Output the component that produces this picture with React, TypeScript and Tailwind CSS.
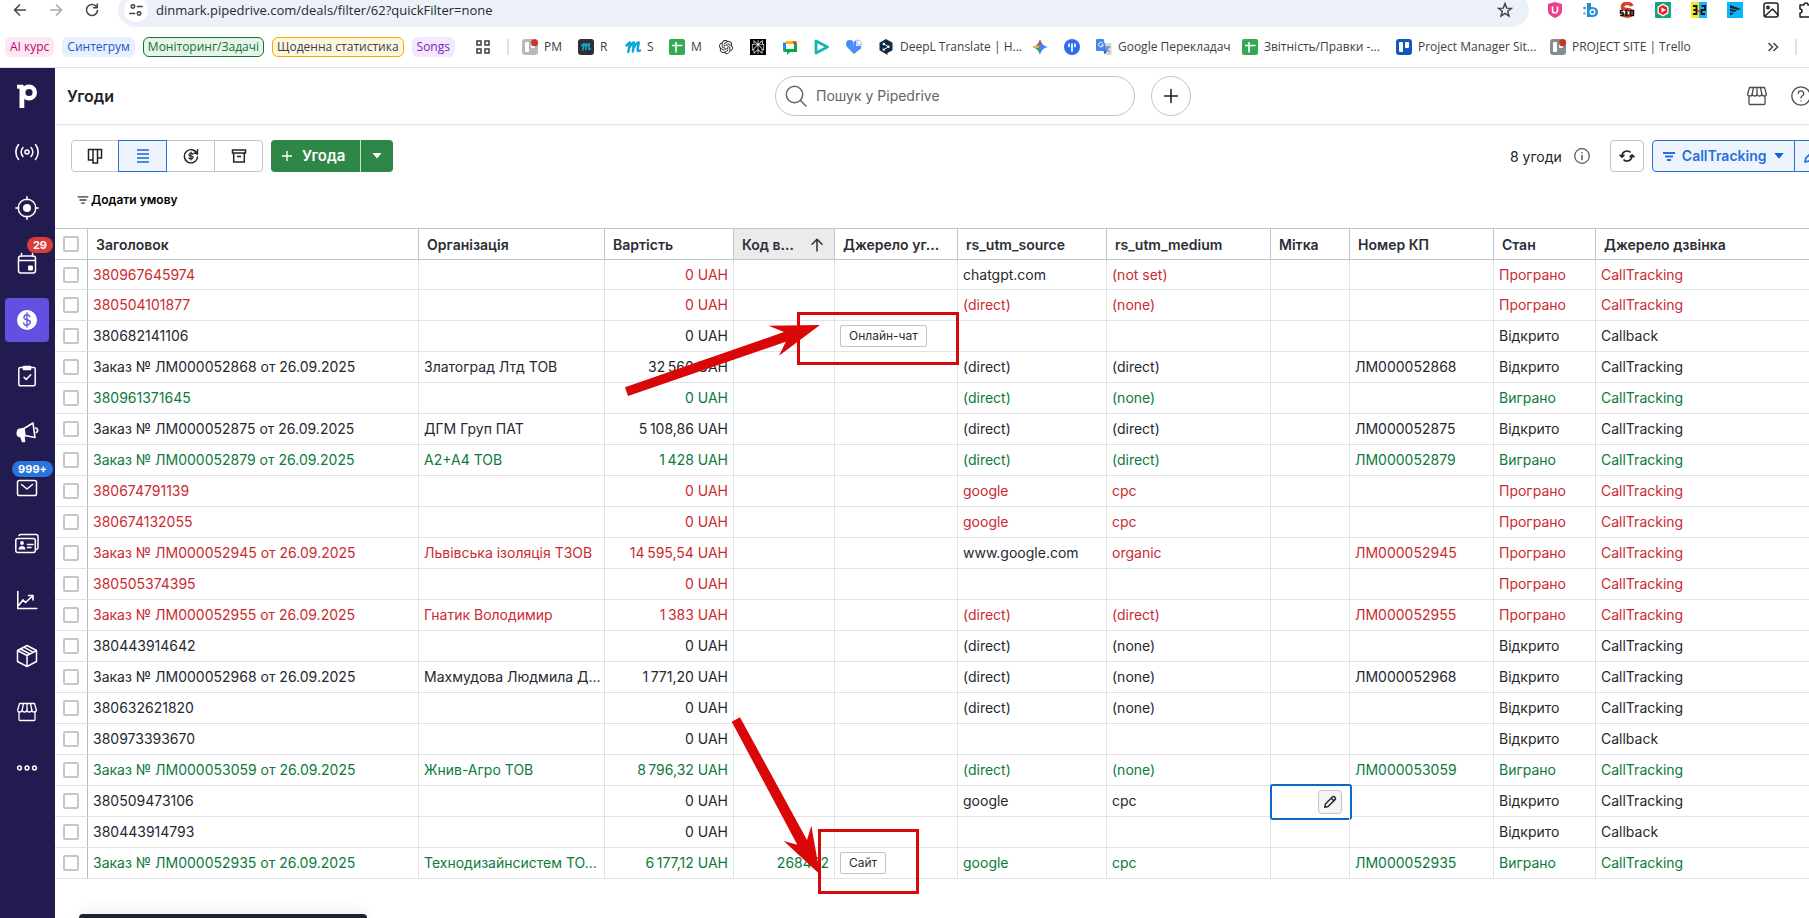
import React from "react";
import { SiOpenai, SiPerplexity } from "react-icons/si";

type Tone = "lost" | "won" | "open";

interface Deal {
  title: string;
  org?: string;
  value: string;
  code?: string;
  source?: string;
  utmSource?: string;
  utmSourcePlain?: boolean;
  utmMedium?: string;
  offer?: string;
  call: string;
  tone: Tone;
  editing?: boolean;
}

const toneClass: Record<Tone, string> = {
  lost: "text-[#cb2a30]",
  won: "text-[#0b7a3b]",
  open: "text-[#26282f]",
};

const toneLabel: Record<Tone, string> = {
  lost: "Програно",
  won: "Виграно",
  open: "Відкрито",
};

const CT = "CallTracking";

const deals: Deal[] = [
  { title: "380967645974", value: "0 UAH", utmSource: "chatgpt.com", utmSourcePlain: true, utmMedium: "(not set)", call: CT, tone: "lost" },
  { title: "380504101877", value: "0 UAH", utmSource: "(direct)", utmMedium: "(none)", call: CT, tone: "lost" },
  { title: "380682141106", value: "0 UAH", source: "Онлайн-чат", call: "Callback", tone: "open" },
  { title: "Заказ № ЛМ000052868 от 26.09.2025", org: "Златоград Лтд ТОВ", value: "32\u202f560 UAH", utmSource: "(direct)", utmMedium: "(direct)", offer: "ЛМ000052868", call: CT, tone: "open" },
  { title: "380961371645", value: "0 UAH", utmSource: "(direct)", utmMedium: "(none)", call: CT, tone: "won" },
  { title: "Заказ № ЛМ000052875 от 26.09.2025", org: "ДГМ Груп ПАТ", value: "5\u202f108,86 UAH", utmSource: "(direct)", utmMedium: "(direct)", offer: "ЛМ000052875", call: CT, tone: "open" },
  { title: "Заказ № ЛМ000052879 от 26.09.2025", org: "А2+А4 ТОВ", value: "1\u202f428 UAH", utmSource: "(direct)", utmMedium: "(direct)", offer: "ЛМ000052879", call: CT, tone: "won" },
  { title: "380674791139", value: "0 UAH", utmSource: "google", utmMedium: "cpc", call: CT, tone: "lost" },
  { title: "380674132055", value: "0 UAH", utmSource: "google", utmMedium: "cpc", call: CT, tone: "lost" },
  { title: "Заказ № ЛМ000052945 от 26.09.2025", org: "Львівська ізоляція ТЗОВ", value: "14\u202f595,54 UAH", utmSource: "www.google.com", utmSourcePlain: true, utmMedium: "organic", offer: "ЛМ000052945", call: CT, tone: "lost" },
  { title: "380505374395", value: "0 UAH", call: CT, tone: "lost" },
  { title: "Заказ № ЛМ000052955 от 26.09.2025", org: "Гнатик Володимир", value: "1\u202f383 UAH", utmSource: "(direct)", utmMedium: "(direct)", offer: "ЛМ000052955", call: CT, tone: "lost" },
  { title: "380443914642", value: "0 UAH", utmSource: "(direct)", utmMedium: "(none)", call: CT, tone: "open" },
  { title: "Заказ № ЛМ000052968 от 26.09.2025", org: "Махмудова Людмила Д...", value: "1\u202f771,20 UAH", utmSource: "(direct)", utmMedium: "(none)", offer: "ЛМ000052968", call: CT, tone: "open" },
  { title: "380632621820", value: "0 UAH", utmSource: "(direct)", utmMedium: "(none)", call: CT, tone: "open" },
  { title: "380973393670", value: "0 UAH", call: "Callback", tone: "open" },
  { title: "Заказ № ЛМ000053059 от 26.09.2025", org: "Жнив-Агро ТОВ", value: "8\u202f796,32 UAH", utmSource: "(direct)", utmMedium: "(none)", offer: "ЛМ000053059", call: CT, tone: "won" },
  { title: "380509473106", value: "0 UAH", utmSource: "google", utmMedium: "cpc", call: CT, tone: "open", editing: true },
  { title: "380443914793", value: "0 UAH", call: "Callback", tone: "open" },
  { title: "Заказ № ЛМ000052935 от 26.09.2025", org: "Технодизайнсистем ТО...", value: "6\u202f177,12 UAH", code: "268462", source: "Сайт", utmSource: "google", utmMedium: "cpc", offer: "ЛМ000052935", call: CT, tone: "won" },
];

const line = { fill: "none", stroke: "currentColor", strokeLinecap: "round", strokeLinejoin: "round" } as const;

/* ---------- browser icons ---------- */

function SheetsIcon() {
  return (
    <svg viewBox="0 0 16 16" className="size-4 shrink-0">
      <rect width="16" height="16" rx="2" fill="#34a853" />
      <path d="M3 6.5h10.500M7 3v10.500" stroke="#fff" strokeWidth="1.600" />
    </svg>
  );
}

function TrelloIcon({ color, dot }: { color: string; dot?: boolean }) {
  return (
    <svg viewBox="0 0 16 16" className="size-4 shrink-0">
      <rect width="16" height="16" rx="3" fill={color} />
      <rect x="3" y="3" width="4" height="10" rx="1" fill="#fff" />
      <rect x="9" y="3" width="4" height="6" rx="1" fill="#fff" />
      {dot && <circle cx="12.500" cy="3.800" r="3.500" fill="#d03025" />}
    </svg>
  );
}

function MIcon({ dark }: { dark?: boolean }) {
  return (
    <svg viewBox="0 0 16 16" className="size-4 shrink-0">
      {dark && <rect width="16" height="16" rx="3" fill="#2f3033" />}
      <g transform={dark ? "translate(3 3.500) scale(.64)" : "translate(0.500 1.500)"}>
        <path d="M1 5q2-3 3.500-3L2.800 11.500M4 7q3-5.500 4.500-5L7.300 11M8.500 7q3-5.500 4.800-5L12 9.500q0 2 2.500.500" {...line} stroke="#13a4dc" strokeWidth="2.400" />
      </g>
    </svg>
  );
}

function MeetChatIcon() {
  return (
    <svg viewBox="0 0 16 16" className="size-4 shrink-0">
      <path d="M2.500 3.500v8" stroke="#2684fc" strokeWidth="3" />
      <path d="M4 3.500h7" stroke="#ffba00" strokeWidth="3" />
      <path d="M11 2h2a2 2 0 0 1 2 2v1h-4z" fill="#ea4335" />
      <path d="M13.500 5v6.500h-12" stroke="#00ac47" strokeWidth="3" fill="none" />
      <path d="M5 12v4l4-4z" fill="#00ac47" />
    </svg>
  );
}

function PlayIcon() {
  return (
    <svg viewBox="0 0 16 16" className="size-4 shrink-0">
      <path d="M2 2v12l11.500-6z" fill="none" stroke="#14b8b0" strokeWidth="2.800" strokeLinejoin="round" />
    </svg>
  );
}

function HeartIcon() {
  return (
    <svg viewBox="0 0 16 16" className="size-4 shrink-0">
      <path d="M0 5a4 4 0 0 1 7.500-2L8 9h7.500L8 15 1 8Q0 7 0 5z" fill="#4c8dfb" />
      <path d="M8 9V3l2-2v6h5.500Q15 9 14 10z" fill="#4c8dfb" />
      <path d="M11 1q4 0 4.500 5H11z" fill="none" stroke="#8db6fd" />
    </svg>
  );
}

function DeeplIcon() {
  return (
    <svg viewBox="0 0 16 16" className="size-4 shrink-0">
      <path d="M8 0l6.500 3.700v7.600L9.500 14v2L8 15 1.500 11.300V3.700z" fill="#0f2b46" />
      <path d="M6 5l4.500 2.700L6 10.500" stroke="#fff" fill="none" strokeWidth=".9" />
      <circle cx="5.800" cy="5" r="1.200" fill="#fff" />
      <circle cx="10.500" cy="7.700" r="1.200" fill="#fff" />
      <circle cx="5.800" cy="10.600" r="1.200" fill="#fff" />
    </svg>
  );
}

function GeminiIcon() {
  return (
    <svg viewBox="0 0 16 16" className="size-4 shrink-0">
      <defs>
        <clipPath id="spark">
          <path d="M8 .300Q9.500 6.500 15.700 8 9.500 9.500 8 15.700 6.500 9.500.300 8 6.500 6.500 8 .300z" />
        </clipPath>
      </defs>
      <g clipPath="url(#spark)">
        <rect width="16" height="16" fill="#4285f4" />
        <path d="M0 0h12L8 6.500z" fill="#ea4335" />
        <path d="M0 5.500L7 7v2L0 10z" fill="#fbbc04" />
        <path d="M0 9.500l7-1 1 7.500H0z" fill="#34a853" />
      </g>
    </svg>
  );
}

function BlueDotIcon() {
  return (
    <svg viewBox="0 0 16 16" className="size-4 shrink-0">
      <circle cx="8" cy="8" r="8" fill="#2f6df0" />
      <path d="M5 5v2.500M8 5v7M11 5v2.500" stroke="#fff" strokeWidth="1.700" strokeLinecap="round" />
    </svg>
  );
}

function TranslateIcon() {
  return (
    <svg viewBox="0 0 16 16" className="size-4 shrink-0">
      <path d="M7 4h8.500v12H10z" fill="#d5d8db" />
      <path d="M9.500 8h5M12 7v1q0 3-2.500 5M10.500 9q1 3 3.500 4" stroke="#6d7782" fill="none" strokeWidth=".9" />
      <path d="M0 1q0-1 1-1h6.500l3.500 12H1q-1 0-1-1z" fill="#4387f4" />
      <path d="M7.500 12H11l-2.500 3.500z" fill="#2a56c6" />
      <path d="M7 4.500A2.300 2.300 0 1 0 7.300 6H5.200" fill="none" stroke="#fff" strokeWidth="1" />
    </svg>
  );
}

const bookmarks: { name: string; label?: string; width: string; icon: React.ReactNode }[] = [
  { name: "PM", label: "PM", width: "w-[52px]", icon: <TrelloIcon color="#b9b9b9" dot /> },
  { name: "R", label: "R", width: "w-[43px]", icon: <MIcon dark /> },
  { name: "S", label: "S", width: "w-10", icon: <MIcon /> },
  { name: "M", label: "M", width: "w-[45px]", icon: <SheetsIcon /> },
  { name: "ChatGPT", width: "w-7", icon: <span className="size-4 shrink-0 p-px text-[#2b2b2b]"><SiOpenai className="size-3.5" /></span> },
  { name: "Perplexity", width: "w-7", icon: <span className="size-4 shrink-0 bg-black p-px text-white"><SiPerplexity className="size-3.5" /></span> },
  { name: "Google Chat", width: "w-7", icon: <MeetChatIcon /> },
  { name: "Player", width: "w-7", icon: <PlayIcon /> },
  { name: "Heart", width: "w-7", icon: <HeartIcon /> },
  { name: "DeepL", label: "DeepL Translate | H...", width: "w-[150px]", icon: <DeeplIcon /> },
  { name: "Gemini", width: "w-7", icon: <GeminiIcon /> },
  { name: "Board", width: "w-7", icon: <BlueDotIcon /> },
  { name: "Translate", label: "Google Перекладач", width: "w-[142px]", icon: <TranslateIcon /> },
  { name: "Reports", label: "Звітність/Правки -...", width: "w-[150px]", icon: <SheetsIcon /> },
  { name: "Manager", label: "Project Manager Sit...", width: "w-[150px]", icon: <TrelloIcon color="#1558bc" /> },
  { name: "Project", label: "PROJECT SITE | Trello", width: "w-[150px]", icon: <TrelloIcon color="#838c91" dot /> },
];

const chips = [
  { label: "AI курс", style: "border-[#fde7f3] bg-[#fde7f3] text-[#b80672]" },
  { label: "Синтегрум", style: "border-[#e8f0fe] bg-[#e8f0fe] text-[#1a56c8]" },
  { label: "Моніторинг/Задачі", style: "border-[#137333] bg-[#e6f4ea] text-[#137333]" },
  { label: "Щоденна статистика", style: "border-[#f9ab00] bg-[#fef7e0] text-[#3c4043]" },
  { label: "Songs", style: "border-[#f3e8fd] bg-[#f3e8fd] text-[#7627bb]" },
];

function ExtensionIcons() {
  const box = "size-4 shrink-0";
  return (
    <div className="flex items-center gap-5">
      <svg viewBox="0 0 16 16" className={box}>
        <path d="M8 0l7 2v7q0 4-7 7-7-3-7-7V2z" fill="#ec3f8c" />
        <path d="M5.500 4.500v4a2.500 2.500 0 0 0 5 0v-4" fill="none" stroke="#fff" strokeWidth="1.600" />
      </svg>
      <svg viewBox="0 0 16 16" className={box}>
        <circle cx="1.500" cy="6" r="1.300" fill="#1d8bd1" />
        <circle cx="1.500" cy="11.500" r="1.300" fill="#5bb5e8" />
        <path d="M4 1h4v4q7 0 7 5t-6 5H4z" fill="#1d8fd6" />
        <circle cx="9.500" cy="10" r="2.300" fill="none" stroke="#fff" strokeWidth="1.400" />
      </svg>
      <svg viewBox="0 0 16 16" className={box}>
        <path d="M13 4Q12 1.500 8 1.500T3.500 4.500 8 7.500t4.500 3.500T8 14 3 12" fill="none" stroke="#d1432f" strokeWidth="3.600" />
        <path d="M4 8.500H1.500v2.500H4v2.500H1M9.500 8.500H7V13.500h2.500M7 11h2M11.500 8.500h3v5h-3z" fill="none" stroke="#111" strokeWidth="1.500" />
      </svg>
      <svg viewBox="0 0 16 16" className={box}>
        <rect width="16" height="16" rx="1" fill="#12a37f" />
        <path d="M8 1.500l5.500 3.200v6.600L8 14.500l-5.500-3.200V4.700z" fill="#fff" />
        <path d="M8 3l4.200 2.500v5L8 13l-4.200-2.500v-5z" fill="#ee1c25" />
        <path d="M6.500 5.500v5L11 8z" fill="#fff" />
      </svg>
      <svg viewBox="0 0 16 16" className={box}>
        <path d="M0 0h8v16H0z" fill="#f7e71c" />
        <path d="M8 0h8v16H8z" fill="#12b5f5" />
        <path d="M2 4h3.500v8H2M2.500 8h3M10.500 4H14v4h-3.500v4H14" fill="none" stroke="#111" strokeWidth="1.800" />
        <path d="M6.500 9h3" stroke="#e11" strokeWidth="1.500" />
      </svg>
      <svg viewBox="0 0 16 16" className={box}>
        <path d="M0 0h16v16H0z" fill="#08b7fb" />
        <path d="M3 3l11 4-3 1-8-2zM3 7l7 1.500-2.500 1.500L3 9zM3 10.500l4 .5-4 2.500z" fill="#15202b" />
      </svg>
      <svg viewBox="0 0 16 16" className={box} {...line} strokeWidth="1.500">
        <rect x="1" y="1" width="14" height="14" rx="2" />
        <circle cx="5" cy="5.500" r="1.200" />
        <path d="M2 14l7.500-7 5.500 6" />
      </svg>
      <svg viewBox="0 0 16 16" className={box} {...line} strokeWidth="1.500">
        <path d="M1 3h4a2 2 0 0 1 4 0h4v4a2 2 0 0 1 0 4v4H1v-4a2 2 0 0 0 0-4z" />
      </svg>
    </div>
  );
}

function Browser() {
  return (
    <div className="border-b border-[#dfe1e4] bg-white text-[#3c4043]">
      <div className="flex h-[27px] items-end overflow-hidden">
        <div className="flex h-[34px] w-full shrink-0 items-center">
          <div className="flex w-[118px] shrink-0 items-center gap-5 pl-3">
            <button aria-label="Назад" className="text-[#474747]">
              <svg viewBox="0 0 16 16" className="size-4" {...line} strokeWidth="1.600" strokeLinecap="butt"><path d="M14 8H2.500M8 2.500L2.500 8 8 13.500" /></svg>
            </button>
            <button aria-label="Вперед" className="text-[#a9a9a9]">
              <svg viewBox="0 0 16 16" className="size-4" {...line} strokeWidth="1.600" strokeLinecap="butt"><path d="M2 8h11.500M8 2.500L13.500 8 8 13.500" /></svg>
            </button>
            <button aria-label="Оновити" className="text-[#474747]">
              <svg viewBox="0 0 16 16" className="size-4" {...line} strokeWidth="1.600" strokeLinecap="butt"><path d="M13.500 8a5.500 5.500 0 1 1-1.600-3.900L13 5.500" /><path d="M13.300 1.500v4.300H9" /></svg>
            </button>
          </div>
          <div className="flex h-[34px] min-w-0 flex-1 items-center rounded-full bg-[#ecf0f9] pl-1.5 pr-4">
            <span className="flex size-6 shrink-0 items-center justify-center rounded-full bg-white">
              <svg viewBox="0 0 16 16" className="size-3.5" {...line} strokeWidth="1.700"><circle cx="4.500" cy="4" r="2" /><path d="M9.500 4H15M1 12h5.500" /><circle cx="11.500" cy="12" r="2" /></svg>
            </span>
            <input
              aria-label="Адреса"
              defaultValue="dinmark.pipedrive.com/deals/filter/62?quickFilter=none"
              className="ml-2 min-w-0 flex-1 bg-transparent pt-0.5 font-['Open_Sans','Noto_Sans',sans-serif] text-[13px] text-[#27292d] outline-none"
            />
            <button aria-label="Додати закладку">
              <svg viewBox="0 0 16 16" className="size-4" {...line} strokeWidth="1.400" strokeLinejoin="miter"><path d="M8 1.500l1.700 4.600 4.800.2-3.800 3 1.300 4.700L8 11.300 4 14l1.300-4.700-3.800-3 4.800-.2z" /></svg>
            </button>
          </div>
          <div className="w-[280px] shrink-0 overflow-hidden pl-[18px] text-[#1f1f1f]">
            <ExtensionIcons />
          </div>
        </div>
      </div>
      <nav aria-label="Закладки" className="flex h-10 items-center overflow-hidden pl-[5px] pb-px pr-3 font-['Open_Sans','Noto_Sans',sans-serif] text-xs">
        <div className="flex shrink-0 items-center gap-2">
          {chips.map((c) => (
            <button key={c.label} className={`flex h-5 items-center whitespace-nowrap rounded-md border px-1 font-medium ${c.style}`}>
              {c.label}
            </button>
          ))}
          <button aria-label="Усі групи" className="ml-3 flex size-4 items-center justify-center">
            <svg viewBox="0 0 14 14" className="size-3.5" fill="none" stroke="#474747" strokeWidth="1.600">
              <rect x="1" y="1" width="4" height="4" /><rect x="9" y="1" width="4" height="4" /><rect x="1" y="9" width="4" height="4" /><rect x="9" y="9" width="4" height="4" />
            </svg>
          </button>
        </div>
        <span className="ml-4 h-4 w-0.5 shrink-0 bg-[#d3e3fd]" />
        <div className="ml-[7px] flex min-w-0 flex-1 items-center gap-1 overflow-hidden">
          {bookmarks.map((b) => (
            <a key={b.name} href="#" aria-label={b.name} className={`flex h-7 shrink-0 items-center gap-1.5 whitespace-nowrap px-1.5 ${b.width}`}>
              {b.icon}
              {b.label}
            </a>
          ))}
        </div>
        <button aria-label="Інші закладки" className="mr-4 shrink-0">
          <svg viewBox="0 0 12 12" className="size-3" fill="none" stroke="#474747" strokeWidth="1.500"><path d="M1.500 2l4 4-4 4M6.500 2l4 4-4 4" /></svg>
        </button>
        <span className="h-4 w-0.5 shrink-0 bg-[#d3e3fd]" />
      </nav>
    </div>
  );
}

/* ---------- sidebar ---------- */

function ShopIcon({ className }: { className: string }) {
  return (
    <svg viewBox="0 0 20 20" className={className} {...line} strokeWidth="1.300">
      <path d="M2.500 1.500h15l1.800 6.500q0 2-2.200 2t-2.300-2q0 2-2.400 2T10 8q0 2-2.400 2T5.200 8q0 2-2.300 2T.700 8z" />
      <path d="M6.500 1.500L5.200 8M10 1.500V8M13.500 1.500L14.800 8M2 10.500v7q0 1 1 1h14q1 0 1-1v-7" />
    </svg>
  );
}

const sideIcon = "size-6";

const sideItems: { name: string; icon: React.ReactNode; badge?: string; badgeStyle?: string; active?: boolean }[] = [
  {
    name: "Pulse",
    icon: (
      <svg viewBox="0 0 24 24" className={sideIcon} {...line} strokeWidth="1.600">
        <circle cx="12" cy="12" r="2" />
        <path d="M8 16.500a6.500 6.500 0 0 1 0-9M16 7.500a6.500 6.500 0 0 1 0 9M3.500 19.500a12 12 0 0 1 0-15M20.500 4.500a12 12 0 0 1 0 15" />
      </svg>
    ),
  },
  {
    name: "Ліди",
    icon: (
      <svg viewBox="0 0 24 24" className={sideIcon} {...line} strokeWidth="1.500">
        <circle cx="12" cy="12" r="8.800" />
        <circle cx="12" cy="12" r="4" fill="currentColor" stroke="none" />
        <path d="M12 .800v3M12 20.200v3M.800 12h3M20.200 12h3" />
      </svg>
    ),
  },
  {
    name: "Календар",
    badge: "29",
    badgeStyle: "bg-[#dc3c37] px-[6px]",
    icon: (
      <svg viewBox="0 0 24 24" className={sideIcon} {...line} strokeWidth="1.500">
        <rect x="3.500" y="4" width="17" height="17" rx="2.500" />
        <path d="M4 8.500h16M6.500 1.500V4M17.500 1.500V4" />
        <rect x="13" y="13.500" width="5" height="5" rx="1" fill="currentColor" stroke="none" />
      </svg>
    ),
  },
  {
    name: "Угоди",
    active: true,
    icon: (
      <svg viewBox="0 0 24 24" className={sideIcon}>
        <circle cx="12" cy="12" r="10" fill="#fff" />
        <path d="M15 8.800q-.5-2-3-2t-3 2.200 3 2.800 3.200 2.700-3.200 2.700-3.300-2.200M12 5v14" fill="none" stroke="#6450e0" strokeWidth="1.400" strokeLinecap="round" />
      </svg>
    ),
  },
  {
    name: "Проєкти",
    icon: (
      <svg viewBox="0 0 24 24" className={sideIcon} {...line} strokeWidth="1.500">
        <rect x="3.800" y="3.500" width="16.400" height="18.300" rx="1.500" />
        <path d="M8.500 2.500h7v3h-7z" fill="currentColor" />
        <path d="M9 13.200l2.200 2.200 4.500-4.700" />
      </svg>
    ),
  },
  {
    name: "Кампанії",
    icon: (
      <svg viewBox="0 0 24 24" className={sideIcon} {...line} strokeWidth="1.600">
        <path d="M9 8.500l9-5.500 2 14.500-10-2" />
        <path d="M9 8.500l1 7.500-6 .5q-1.500-.2-1.800-2.500T3.500 9.500z" fill="currentColor" />
        <path d="M6 17l1.500 4.500H9.500L9 17z" fill="currentColor" />
        <path d="M20.500 8q2 .3 2.200 2t-1.500 2.500" />
      </svg>
    ),
  },
  {
    name: "Пошта",
    badge: "999+",
    badgeStyle: "bg-[#2a74da] px-[6px]",
    icon: (
      <svg viewBox="0 0 24 24" className={sideIcon} {...line} strokeWidth="1.500">
        <rect x="2.500" y="4.500" width="19" height="15" rx="1.800" />
        <path d="M6.500 8.500L12 13l5.500-4.500" />
      </svg>
    ),
  },
  {
    name: "Контакти",
    icon: (
      <svg viewBox="0 0 24 24" className={sideIcon} {...line} strokeWidth="1.500">
        <rect x=".8" y="6.500" width="19.500" height="14" rx="2" />
        <path d="M4 3.500Q4.500 2.500 6 2.500h15q2 0 2 2v11q0 1.500-1.500 1.800" />
        <circle cx="7" cy="11" r="1.900" fill="currentColor" stroke="none" />
        <path d="M3.500 17.500q.2-3.500 3.500-3.500t3.500 3.500z" fill="currentColor" stroke="none" />
        <path d="M12.500 12.500H18M12.500 15.500H16" />
      </svg>
    ),
  },
  {
    name: "Статистика",
    icon: (
      <svg viewBox="0 0 24 24" className={sideIcon} {...line} strokeWidth="1.600">
        <path d="M2.800 3.500v17h19M4 17l4-5 2.500 2.500L17 8.500M13.500 7.500h4.500V12" strokeLinejoin="miter" />
      </svg>
    ),
  },
  {
    name: "Продукти",
    icon: (
      <svg viewBox="0 0 24 24" className={sideIcon} {...line} strokeWidth="1.500">
        <path d="M12 1.500l9.500 5v11L12 22.500l-9.500-5v-11zM2.500 6.500L12 11.500l9.500-5M12 11.500v11M5.500 5l9.500 5M8.800 3.200l9.200 5" />
      </svg>
    ),
  },
  { name: "Marketplace", icon: <ShopIcon className="size-5" /> },
  {
    name: "Більше",
    icon: (
      <svg viewBox="0 0 24 24" className={sideIcon} fill="none" stroke="currentColor" strokeWidth="1.500">
        <circle cx="4.500" cy="12" r="1.900" /><circle cx="12" cy="12" r="1.900" /><circle cx="19.500" cy="12" r="1.900" />
      </svg>
    ),
  },
];

function Sidebar() {
  return (
    <nav aria-label="Головне меню" className="w-[55px] shrink-0 bg-[#211b50] pr-px text-white">
      <a href="#" aria-label="Pipedrive" className="flex h-14 items-center justify-center">
        <svg viewBox="0 0 20 24" className="h-6 w-5" fill="none" stroke="currentColor">
          <circle cx="12" cy="8.500" r="5.800" strokeWidth="4.400" />
          <path d="M4.900 1.500V24" strokeWidth="4.800" />
          <path d="M0 2.700h6" strokeWidth="4" />
        </svg>
      </a>
      {sideItems.map((item) => (
        <div key={item.name} className="flex h-14 items-center justify-center">
          <a
            href="#"
            aria-label={item.name}
            className={`relative flex size-11 items-center justify-center rounded ${item.active ? "bg-[#6450e0]" : ""}`}
          >
            {item.icon}
            {item.badge && (
              <span className={`absolute -right-1 -top-[5px] flex h-4 items-center rounded-full text-[11px] font-bold ${item.badgeStyle}`}>
                {item.badge}
              </span>
            )}
          </a>
        </div>
      ))}
    </nav>
  );
}

/* ---------- page ---------- */

function Header() {
  return (
    <header className="flex h-[57px] items-center border-b border-[#e3e4e6] bg-white shadow-[0_1px_2px_rgba(0,0,0,0.05)]">
      <h1 className="mr-[90px] min-w-0 flex-1 pl-3 text-base font-semibold">Угоди</h1>
      <div className="flex shrink-0 items-center gap-4">
        <label className="flex h-10 w-[360px] items-center gap-2 rounded-full border border-[#c3c4c7] pl-2 pr-4 text-[#63656d]">
          <svg viewBox="0 0 24 24" className="size-6 shrink-0" {...line} strokeWidth="1.500"><circle cx="10.500" cy="10.500" r="8.200" /><path d="M16.500 16.500l5.500 5.500" /></svg>
          <input type="search" aria-label="Пошук у Pipedrive" placeholder="Пошук у Pipedrive" className="min-w-0 flex-1 bg-transparent text-sm outline-none placeholder:text-[#63656d]" />
        </label>
        <button aria-label="Додати" className="flex size-10 items-center justify-center rounded-full border border-[#c3c4c7]">
          <svg viewBox="0 0 16 16" className="size-4" {...line} strokeWidth="1.600"><path d="M8 1.500v13M1.500 8h13" /></svg>
        </button>
      </div>
      <div className="flex flex-1 justify-end overflow-hidden text-[#4b4d55]">
        <div className="flex w-[62px] shrink-0 gap-6">
          <button aria-label="Marketplace"><ShopIcon className="size-5" /></button>
          <button aria-label="Довідка">
            <svg viewBox="0 0 20 20" className="size-5" {...line} strokeWidth="1.300"><circle cx="10" cy="10" r="9.200" /><path d="M7.300 7.500a2.700 2.700 0 1 1 3.800 2.500Q10 10.500 10 12M10 14.800v.100" /></svg>
          </button>
        </div>
      </div>
    </header>
  );
}

function FilterLines({ className }: { className: string }) {
  return (
    <svg viewBox="0 0 12 9" className={className} stroke="currentColor" strokeWidth="2"><path d="M0 1h12M2 4.500h8M4 8h4" /></svg>
  );
}

function Pencil({ className }: { className: string }) {
  return (
    <svg viewBox="0 0 16 16" className={className} {...line} strokeWidth="1.700"><path d="M2 14l.8-3.800L11 2q1.300-.9 2.500.3T14 5l-8.200 8.200zM9.500 3.800l2.700 2.700" /></svg>
  );
}

function Toolbar() {
  const cell = "flex w-12 items-center justify-center border-l border-[#c3c4c7]";
  return (
    <div className="flex items-center pl-4 pt-[15px]">
      <div className="flex h-8 w-48 rounded border border-[#c3c4c7]">
        <button aria-label="Воронка" className="flex w-[46px] items-center justify-center">
          <svg viewBox="0 0 16 16" className="size-4" fill="none" stroke="currentColor" strokeWidth="1.500"><path d="M1.500 1.500h13v8.500h-4V15H6V12H1.500zM6 1.500V13M10.500 1.500V12" /></svg>
        </button>
        <button aria-label="Список" aria-pressed="true" className="-my-px flex w-[49px] items-center justify-center border border-[#2a6fd8] bg-[#edf4fe] text-[#1a66cc]">
          <svg viewBox="0 0 12 14" className="h-3.5 w-3" stroke="currentColor" strokeWidth="1.600"><path d="M0 1h12M0 5h12M0 9h12M0 13h12" /></svg>
        </button>
        <button aria-label="Прогноз" className="flex w-[47px] items-center justify-center">
          <svg viewBox="0 0 16 16" className="size-4" {...line} strokeWidth="1.400"><path d="M14.300 6.500A6.600 6.600 0 1 0 14.500 9M14.500 1.800v3.500h-3.500" /><path d="M10 6.200q-.4-1.200-2-1.200T6 6.400 8 8t2 1.600T8 11t-2-1.200M8 4v8" strokeWidth="1.200" /></svg>
        </button>
        <button aria-label="Архів" className={cell}>
          <svg viewBox="0 0 16 16" className="size-4" fill="none" stroke="currentColor" strokeWidth="1.500"><path d="M1.500 2h13v3h-13zM2.700 5v9h10.600V5M6 8.500h4" /></svg>
        </button>
      </div>
      <div className="ml-2 flex h-8 overflow-hidden rounded bg-[#2e8647] text-white">
        <button className="flex w-[89px] items-center gap-2.5 pl-[11px] text-[15px] font-semibold">
          <svg viewBox="0 0 12 12" className="size-2.5" stroke="currentColor" strokeWidth="1.600"><path d="M6 0v12M0 6h12" /></svg>
          Угода
        </button>
        <button aria-label="Ще варіанти" className="flex w-[33px] items-center justify-center border-l border-[#c9e2d0]">
          <svg viewBox="0 0 10 6" className="h-1.5 w-2.5" fill="currentColor"><path d="M.500 0h9L5 5.500z" /></svg>
        </button>
      </div>
      <div className="ml-auto flex h-8 w-[299px] shrink-0 items-center overflow-hidden">
        <span className="whitespace-nowrap pt-0.5 text-sm">8 угоди</span>
        <svg viewBox="0 0 16 16" className="ml-3 size-4 shrink-0 text-[#52545c]" {...line} strokeWidth="1.200"><circle cx="8" cy="8" r="7.300" /><path d="M8 7.500v4M8 4.600v.100" strokeWidth="1.500" /></svg>
        <button aria-label="Оновити список" className="ml-5 flex h-8 w-[34px] shrink-0 items-center justify-center rounded border border-[#c3c4c7]">
          <svg viewBox="0 0 16 16" className="size-4" {...line} strokeWidth="1.600"><path d="M3 9V8a5 5 0 0 1 8-4M1 7.200L3 9.200 5 7.200M13 7v1a5 5 0 0 1-8 4M15 8.800L13 6.800 11 8.800" /></svg>
        </button>
        <div className="ml-2 flex h-8 shrink-0 rounded border border-[#2a6fd8] bg-[#edf4fe] text-[#2a6fd8]">
          <button className="flex w-[141px] items-center gap-[7px] pl-2.5 text-sm font-semibold">
            <FilterLines className="h-[9px] w-3" />
            CallTracking
            <svg viewBox="0 0 10 6" className="h-1.5 w-2.5" fill="#1463c8"><path d="M.300 0h9.400L5 5.800z" /></svg>
          </button>
          <button aria-label="Редагувати фільтр" className="flex w-9 items-center border-l border-[#2a6fd8] pl-2">
            <Pencil className="size-4" />
          </button>
        </div>
      </div>
    </div>
  );
}

const columns = [
  { label: "Заголовок", width: "w-[331px]" },
  { label: "Організація", width: "w-[186px]" },
  { label: "Вартість", width: "w-[129px]" },
  { label: "Код в...", width: "w-[101px]", sorted: true },
  { label: "Джерело уг...", width: "w-[123px]" },
  { label: "rs_utm_source", width: "w-[149px]" },
  { label: "rs_utm_medium", width: "w-[164px]" },
  { label: "Мітка", width: "w-[79px]" },
  { label: "Номер КП", width: "w-36" },
  { label: "Стан", width: "w-[102px]" },
  { label: "Джерело дзвінка", width: "w-auto" },
];

function Tick({ label }: { label: string }) {
  return (
    <input
      type="checkbox"
      aria-label={label}
      className="mx-auto block size-4 appearance-none rounded-xs border-2 border-[#c6c7c9] bg-white checked:bg-[#2a6fd8]"
    />
  );
}

function DealsTable() {
  const td = "overflow-hidden whitespace-nowrap border-b border-r border-[#e1e2e3] px-[5px] last:border-r-0";
  return (
    <table className="w-full table-fixed border-separate border-spacing-0 text-left text-sm">
      <thead className="text-[#2c2e37]">
        <tr className="h-8">
          <th className="w-[33px] border-y border-r border-[#c3c4c7] p-0"><Tick label="Вибрати всі" /></th>
          {columns.map((c) => (
            <th key={c.label} className={`whitespace-nowrap border-y border-r border-[#c3c4c7] px-2 pb-0 pt-0.5 font-semibold last:border-r-0 ${c.width} ${c.sorted ? "bg-[#ebebec]" : ""}`}>
              <div className="flex items-center justify-between">
                {c.label}
                {c.sorted && (
                  <svg viewBox="0 0 14 14" className="mr-0.5 size-3.5" {...line} strokeWidth="1.500"><path d="M7 13V1.500M2 6.300L7 1.300l5 5" /></svg>
                )}
              </div>
            </th>
          ))}
        </tr>
      </thead>
      <tbody>
        {deals.map((d, i) => (
          <tr key={d.title} className={`${i === 0 ? "h-[30px]" : "h-[31px]"} ${toneClass[d.tone]}`}>
            <td className="border-b border-r border-b-[#e1e2e3] border-r-[#b9babd] p-0"><Tick label={`Вибрати ${d.title}`} /></td>
            <td className={td}>{d.title}</td>
            <td className={td}>{d.org}</td>
            <td className={`${td} text-right`}>{d.value}</td>
            <td className={`${td} text-right`}>{d.code}</td>
            <td className={td}>
              {d.source && (
                <span className="flex h-[22px] w-fit items-center rounded-xs border border-[#c3c4c7] px-2 text-xs text-[#2c2e37]">{d.source}</span>
              )}
            </td>
            <td className={`${td} ${d.utmSourcePlain ? "text-[#26282f]" : ""}`}>{d.utmSource}</td>
            <td className={td}>{d.utmMedium}</td>
            <td className="relative border-b border-r border-[#e1e2e3] p-0">
              {d.editing && (
                <div className="absolute -left-px -right-[3px] -top-0.5 -bottom-1 flex items-center justify-end rounded-[3px] border-2 border-[#0d66c9] bg-white pr-2">
                  <button aria-label="Редагувати мітку" className="flex size-6 items-center justify-center rounded border border-[#c3c4c7] bg-[#f5f5f6]">
                    <Pencil className="size-3.5" />
                  </button>
                </div>
              )}
            </td>
            <td className={td}>{d.offer}</td>
            <td className={td}>{toneLabel[d.tone]}</td>
            <td className={td}>{d.call}</td>
          </tr>
        ))}
      </tbody>
    </table>
  );
}

/* Red marks drawn over the grid; coordinates are relative to the grid's corner. */
function Annotations() {
  return (
    <>
      <div className="pointer-events-none absolute left-[742px] top-[84px] h-[53px] w-[162px] border-3 border-[#d90708]" />
      <div className="pointer-events-none absolute left-[763px] top-[601px] h-[65px] w-[101px] border-3 border-[#d90708]" />
      <svg width="800" height="660" viewBox="55 228 800 660" className="pointer-events-none absolute left-0 top-0" fill="#d90708">
        <path d="M625 387.300L784 332l-15.500-6.300L820 325l-41 30.700 6.800-14L628 396z" />
        <path d="M731.700 721.700L740 717.300 807 840l4.300-14.300L820 874.500 783.700 841l13.600 3.700z" />
      </svg>
    </>
  );
}

export default function App() {
  return (
    <div className="flex h-screen flex-col overflow-hidden bg-white font-['Inter','Noto_Sans',sans-serif] text-[#21232c]">
      <Browser />
      <div className="flex min-h-0 flex-1">
        <Sidebar />
        <main className="relative min-w-0 flex-1">
          <Header />
          <Toolbar />
          <div className="flex h-14 items-center pl-[22px]">
            <button className="flex items-center gap-0.5 text-xs font-semibold text-black">
              <FilterLines className="h-2 w-3 text-[#6f7178]" />
              Додати умову
            </button>
          </div>
          <div className="relative">
            <DealsTable />
            <Annotations />
          </div>
          <div className="absolute bottom-0 left-6 h-1 w-72 rounded-t bg-[#21232c] shadow-[0_0_16px_rgba(0,0,0,0.2)]" />
        </main>
      </div>
    </div>
  );
}
